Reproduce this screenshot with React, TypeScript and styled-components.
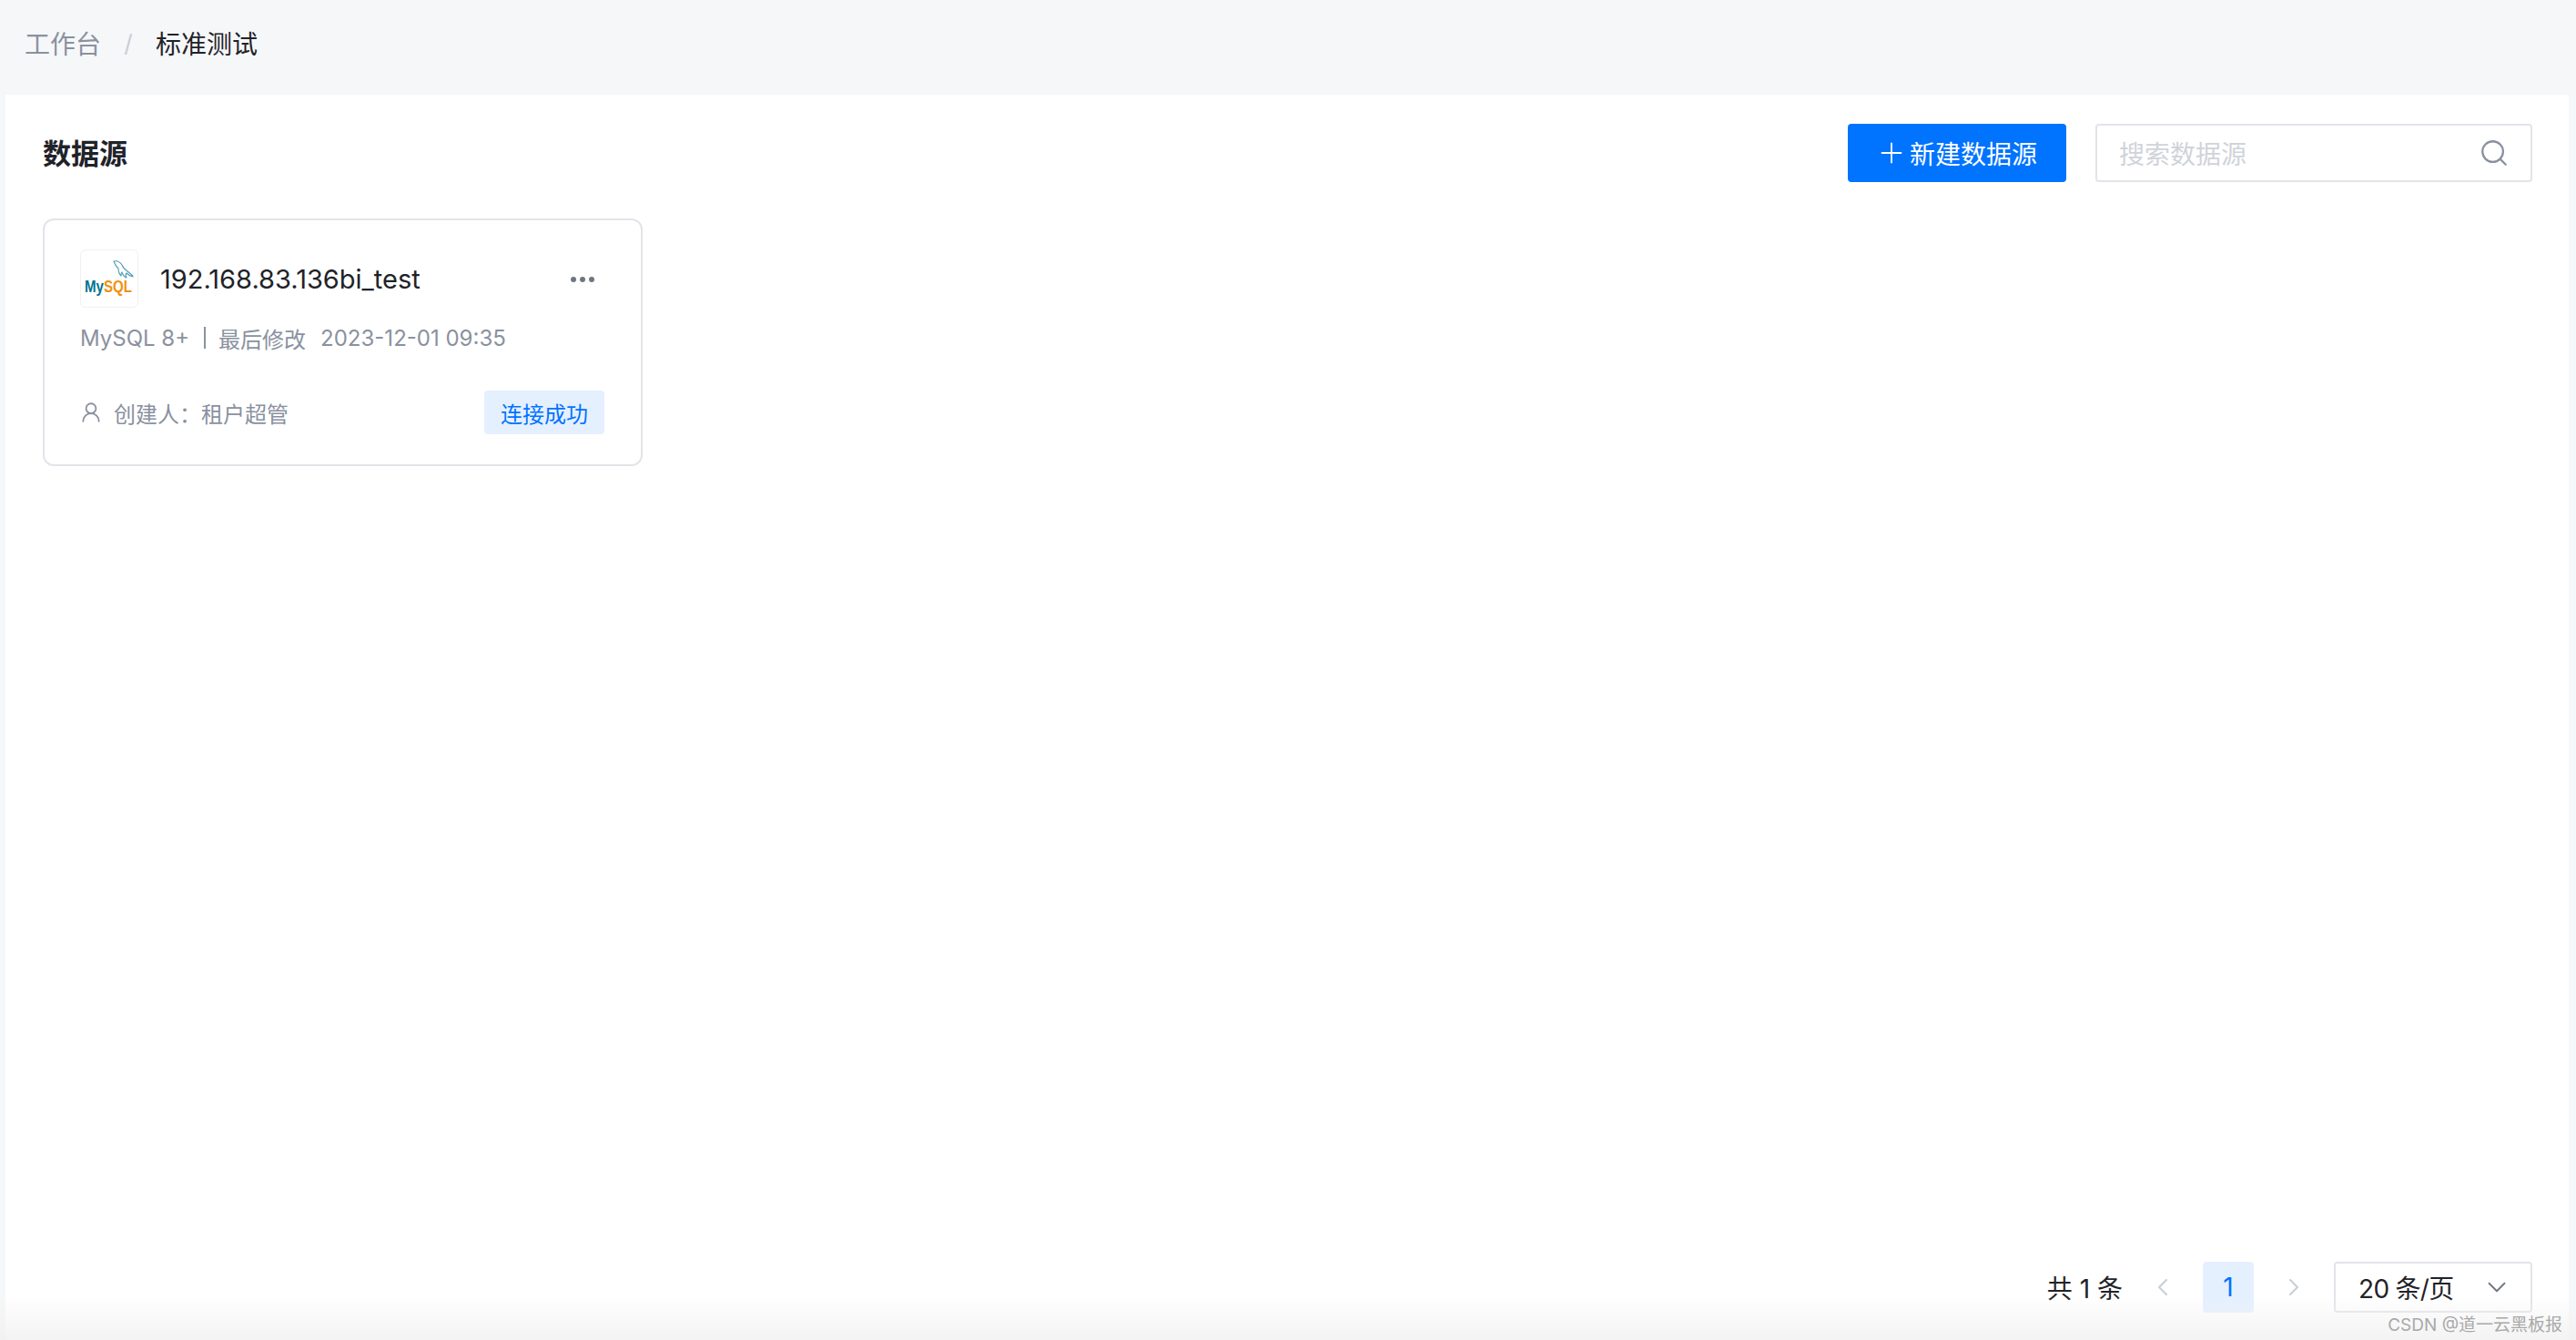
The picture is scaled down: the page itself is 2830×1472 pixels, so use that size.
import React from "react";
import styled, { createGlobalStyle } from "styled-components";
import { ChevronDown, ChevronLeft, ChevronRight, Plus, Search, UserRound } from "lucide-react";

const GlobalStyle = createGlobalStyle`
  html, body, #root {
    margin: 0;
    height: 100%;
  }
  body {
    font-family: Inter, "Noto Sans CJK SC", sans-serif;
    background: #f6f7f9;
  }
`;

const Page = styled.div`
  position: relative;
  height: 100%;
  display: flex;
  flex-direction: column;
  overflow: hidden;

  &::after {
    content: "";
    position: absolute;
    left: 0;
    right: 0;
    bottom: 0;
    height: 48px;
    background: linear-gradient(rgba(240, 240, 240, 0), rgba(240, 240, 240, 0.8));
    pointer-events: none;
  }
`;

const Breadcrumb = styled.nav`
  height: 104px;
  flex: none;
  padding: 0 0 10px 27px;
  box-sizing: border-box;
  display: flex;
  align-items: center;
  font-size: 28px;
`;

const Crumb = styled.span<{ $current?: boolean }>`
  color: ${({ $current }) => ($current ? "#1f2329" : "#8a919f")};
`;

const Slash = styled.span`
  width: 60px;
  text-align: center;
  font-size: 26px;
  color: #c9cdd4;
`;

const Panel = styled.main`
  flex: 1;
  margin: 0 8px 0 6px;
  padding: 32px 40px 30px 41px;
  background: #fff;
  display: flex;
  flex-direction: column;
`;

const Toolbar = styled.div`
  height: 64px;
  display: flex;
  align-items: center;
  justify-content: space-between;
`;

const Title = styled.h1`
  margin: 0 0 3px;
  font-size: 31px;
  font-weight: 600;
  color: #1f2329;
`;

const Actions = styled.div`
  display: flex;
  gap: 32px;
`;

const PrimaryButton = styled.button`
  width: 240px;
  height: 64px;
  border: 0;
  border-radius: 4px;
  background: #0073ff;
  color: #fff;
  font: inherit;
  font-size: 28px;
  display: flex;
  align-items: center;
  justify-content: center;
  gap: 2px;
  padding: 0 2px 0 0;
`;

const SearchBox = styled.div`
  width: 480px;
  height: 64px;
  box-sizing: border-box;
  border: 2px solid #e3e4ea;
  border-radius: 4px;
  padding: 0 23px 0 24px;
  display: flex;
  align-items: center;
  justify-content: space-between;
  color: #8a919f;
`;

const Placeholder = styled.span`
  font-size: 28px;
  color: #d0d3da;
`;

const Card = styled.article`
  width: 659px;
  height: 272px;
  margin-top: 40px;
  box-sizing: border-box;
  border: 2px solid #e3e4ea;
  border-radius: 12px;
  padding: 32px 40px 0 39px;
`;

const CardHead = styled.div`
  height: 64px;
  display: flex;
  align-items: center;
`;

const LogoTile = styled.div`
  width: 64px;
  height: 64px;
  box-sizing: border-box;
  border: 1px solid #f0f1f3;
  border-radius: 6px;
  flex: none;
`;

const Name = styled.div`
  margin-left: 24px;
  padding-top: 1px;
  flex: 1;
  font-size: 29px;
  color: #1f2329;
`;

const MoreDots = styled.div`
  display: flex;
  gap: 4px;
  margin: 2px 11px 0 0;
`;

const Dot = styled.i`
  width: 6px;
  height: 6px;
  border-radius: 50%;
  background: #6f7682;
`;

const Meta = styled.div`
  margin-top: 15px;
  height: 36px;
  display: flex;
  align-items: center;
  font-size: 24px;
  color: #8a919f;
`;

const MetaDivider = styled.span`
  width: 2px;
  height: 24px;
  margin: 0 14px 0 16px;
  background: #8a919f;
`;

const MetaDate = styled.span`
  margin-left: 16px;
`;

const CardFoot = styled.div`
  margin-top: 40px;
  height: 48px;
  display: flex;
  align-items: center;
  justify-content: space-between;
`;

const Creator = styled.div`
  display: flex;
  align-items: center;
  gap: 12px;
  font-size: 24px;
  color: #8a919f;

  svg {
    margin-left: -1px;
  }
`;

const StatusTag = styled.span`
  width: 132px;
  height: 48px;
  border-radius: 4px;
  background: #e5f0ff;
  color: #0073ff;
  font-size: 24px;
  display: flex;
  align-items: center;
  justify-content: center;
`;

const Pagination = styled.div`
  margin-top: auto;
  height: 56px;
  display: flex;
  align-items: center;
  justify-content: flex-end;
  font-size: 28px;
  color: #1f2329;
`;

const Total = styled.span`
  margin-right: 24px;
`;

const PageArrow = styled.span`
  width: 40px;
  display: flex;
  justify-content: center;
  color: #c9cdd4;
`;

const PageNumber = styled.span`
  width: 56px;
  height: 56px;
  margin: 0 24px;
  border-radius: 4px;
  background: #e5f0ff;
  color: #0073ff;
  display: flex;
  align-items: center;
  justify-content: center;
`;

const SizeSelect = styled.div`
  width: 218px;
  height: 56px;
  margin-left: 24px;
  box-sizing: border-box;
  border: 2px solid #e3e4ea;
  border-radius: 4px;
  padding: 0 20px 0 25px;
  display: flex;
  align-items: center;
  justify-content: space-between;
  letter-spacing: -0.7px;

  svg {
    color: #6f7682;
  }
`;

const Watermark = styled.span`
  position: absolute;
  right: 15px;
  bottom: 5px;
  z-index: 1;
  font-size: 19px;
  color: #a9a9a9;
`;

const MySqlLogo = () => (
  <svg width="62" height="62" viewBox="0 0 62 62">
    <path
      d="M36 12c4-1 7 1 9 4 1 3 3 5 6 7 2 2 5 3 6 6-3-1-5-2-7-4-1 1-1 3 0 5-3-1-4-3-5-6-1 1-1 2-1 4-2-2-3-5-3-8-2-2-4-5-5-8z"
      fill="none"
      stroke="#4d9db2"
      strokeWidth="1.1"
      strokeLinejoin="round"
    />
    <text
      x="4"
      y="46"
      fontFamily="'Liberation Sans', sans-serif"
      fontSize="18"
      fontWeight="700"
      textLength="52"
      lengthAdjust="spacingAndGlyphs"
    >
      <tspan fill="#00758f">My</tspan>
      <tspan fill="#f29111">SQL</tspan>
    </text>
  </svg>
);

export default function App() {
  return (
    <>
      <GlobalStyle />
      <Page>
        <Breadcrumb>
          <Crumb>工作台</Crumb>
          <Slash>/</Slash>
          <Crumb $current>标准测试</Crumb>
        </Breadcrumb>
        <Panel>
          <Toolbar>
            <Title>数据源</Title>
            <Actions>
              <PrimaryButton>
                <Plus size={36} strokeWidth={1.2} />
                新建数据源
              </PrimaryButton>
              <SearchBox>
                <Placeholder>搜索数据源</Placeholder>
                <Search size={34} strokeWidth={1.6} />
              </SearchBox>
            </Actions>
          </Toolbar>
          <Card>
            <CardHead>
              <LogoTile>
                <MySqlLogo />
              </LogoTile>
              <Name>192.168.83.136bi_test</Name>
              <MoreDots>
                <Dot />
                <Dot />
                <Dot />
              </MoreDots>
            </CardHead>
            <Meta>
              MySQL 8+
              <MetaDivider />
              最后修改
              <MetaDate>2023-12-01 09:35</MetaDate>
            </Meta>
            <CardFoot>
              <Creator>
                <UserRound size={26} strokeWidth={1.7} />
                <span>创建人：租户超管</span>
              </Creator>
              <StatusTag>连接成功</StatusTag>
            </CardFoot>
          </Card>
          <Pagination>
            <Total>共 1 条</Total>
            <PageArrow>
              <ChevronLeft size={32} strokeWidth={1.5} />
            </PageArrow>
            <PageNumber>1</PageNumber>
            <PageArrow>
              <ChevronRight size={32} strokeWidth={1.5} />
            </PageArrow>
            <SizeSelect>
              20 条/页
              <ChevronDown size={34} strokeWidth={1.3} />
            </SizeSelect>
          </Pagination>
        </Panel>
        <Watermark>CSDN @道一云黑板报</Watermark>
      </Page>
    </>
  );
}
